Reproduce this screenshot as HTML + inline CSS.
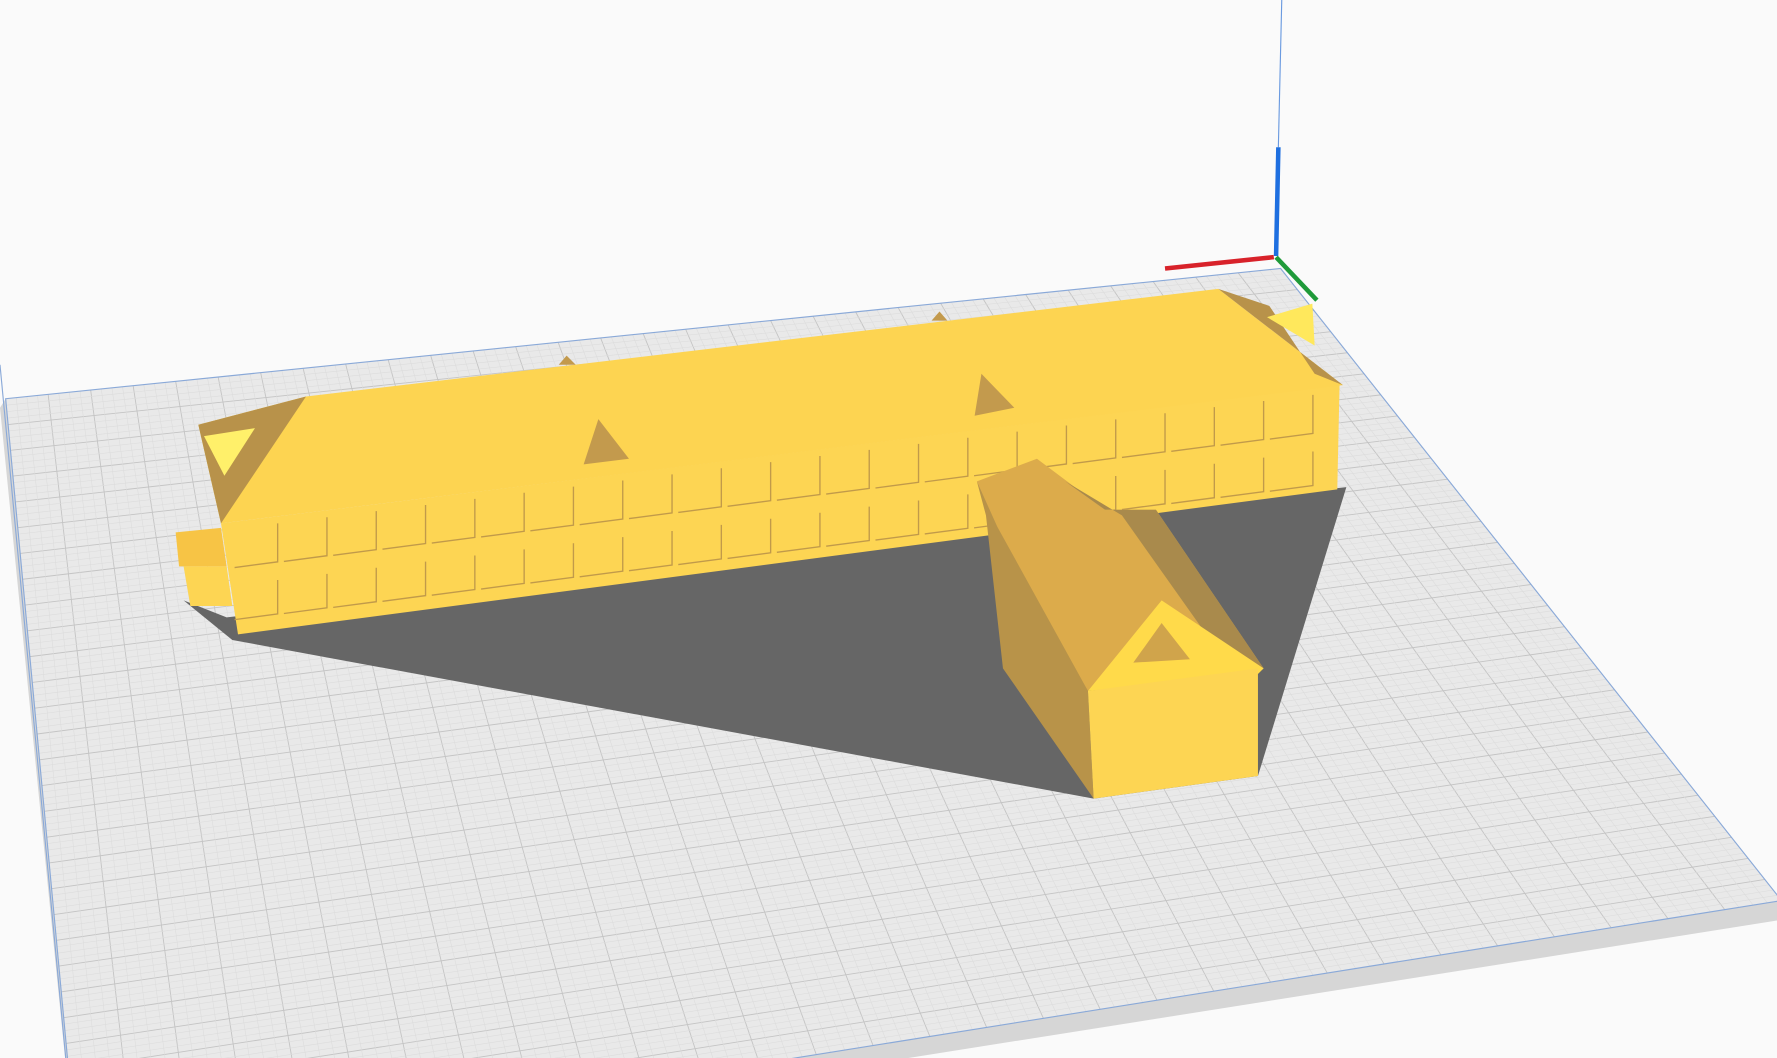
<!DOCTYPE html>
<html><head><meta charset="utf-8"><style>
html,body{margin:0;padding:0;background:#fafafa;width:1777px;height:1058px;overflow:hidden}
svg{display:block;overflow:hidden}
</style></head><body>
<svg id="s" width="1777" height="1058" viewBox="0 0 1568 934" preserveAspectRatio="none" xmlns="http://www.w3.org/2000/svg">
<rect width="1568" height="934" fill="#fafafa"/>
<polygon points="5,352 1130,237 1572,795 1572,812 69,1050 0,360" fill="#d6d6d6"/>
<polygon points="5,352 1130,237 1572,795 69,1035" fill="#e9e9e9"/>
<g id="grid" stroke="#c4c4c4" stroke-width="0.8"></g>
<g id="gridm" stroke="#dcdcdc" stroke-width="0.5"></g>
<polyline points="69,1035 5,352 1130,237 1572,795" fill="none" stroke="#8aa9d8" stroke-width="1"/>
<line x1="69" y1="1035" x2="1572" y2="795" stroke="#8aa9d8" stroke-width="1"/>
<line x1="0" y1="322" x2="58" y2="934" stroke="#8aa9d8" stroke-width="1"/>
<polygon points="162,530 205,565 965,705 1110,685 1188,430 1100,440 870,470 200,545" fill="#666666"/>
<polygon points="195,462 1182,340 1180,432 210,560" fill="#fdd553"/>
<polygon points="175,375 270,350 1075,255 1185,340 195,462" fill="#fdd451"/>
<polygon points="175,375 270,350 195,462" fill="#b8924a"/>
<polygon points="180,385 225,378 198,420" fill="#fff06a"/>
<polygon points="1075,255 1185,340 1160,330 1120,270" fill="#b8924a"/>
<polygon points="1118,280 1158,268 1160,305" fill="#ffe85c"/>
<polygon points="515,410 528,370 555,405" fill="#c39a4d"/>
<polygon points="860,367 866,330 895,360" fill="#c39a4d"/>
<polygon points="493,322 500,314 508,322" fill="#c39a4d"/>
<polygon points="822,283 829,275 836,283" fill="#c39a4d"/>
<polygon points="155,470 195,466 200,500 158,500" fill="#f7c445"/>
<polygon points="162,500 200,500 205,535 168,535" fill="#fdd553"/>
<g id="win" stroke="#c19a4a" stroke-width="1.2" fill="none"></g>
<polygon points="862,425 885,460 960,610 965,705 885,590 870,455" fill="#b89349"/>
<polygon points="862,425 915,405 975,450 1020,450 1115,590 960,610 880,465" fill="#dcab4b"/>
<polygon points="940,425 975,450 1020,450 1115,590 1075,575 990,455" fill="#a98a4c"/>
<polygon points="960,610 1025,530 1115,590 1110,595" fill="#ffda4a"/>
<polygon points="1000,585 1025,550 1050,582" fill="#d0a44b"/>
<polygon points="960,610 1110,590 1110,685 965,705" fill="#fdd553"/>
<line x1="1131" y1="0" x2="1128" y2="130" stroke="#6a9ae0" stroke-width="1"/>
<line x1="1128" y1="130" x2="1126" y2="226" stroke="#1e6fe0" stroke-width="4"/>
<line x1="1028" y1="237" x2="1124" y2="227" stroke="#d8222a" stroke-width="4"/>
<line x1="1126" y1="227" x2="1162" y2="265" stroke="#1f9a3a" stroke-width="4"/>
</svg>
<script>
(function(){
var TL=[5,352],TR=[1130,237],BR=[1572,795],BL=[69,1035];
function P(u,v){return [TL[0]*(1-u)*(1-v)+TR[0]*u*(1-v)+BR[0]*u*v+BL[0]*(1-u)*v,TL[1]*(1-u)*(1-v)+TR[1]*u*(1-v)+BR[1]*u*v+BL[1]*(1-u)*v];}
var g=document.getElementById('grid'),gm=document.getElementById('gridm'),ns='http://www.w3.org/2000/svg';
function L(par,a,b){var l=document.createElementNS(ns,'line');l.setAttribute('x1',a[0]);l.setAttribute('y1',a[1]);l.setAttribute('x2',b[0]);l.setAttribute('y2',b[1]);par.appendChild(l);}
var N=30;
for(var i=1;i<N*4;i++){var t=i/(N*4);var par=(i%4==0)?g:gm;L(par,P(t,0),P(t,1));L(par,P(0,t),P(1,t));}
var w=document.getElementById('win');
function W(x,y,h){var p=document.createElementNS(ns,'path');p.setAttribute('d','M'+x+','+y+' v'+h+' l-38,5');w.appendChild(p);}
for(var k=0;k<22;k++){var x=245+k*43.5,y=462-k*5.4;W(x,y,34);W(x,y+50,30);}
})();
</script>
</body></html>
